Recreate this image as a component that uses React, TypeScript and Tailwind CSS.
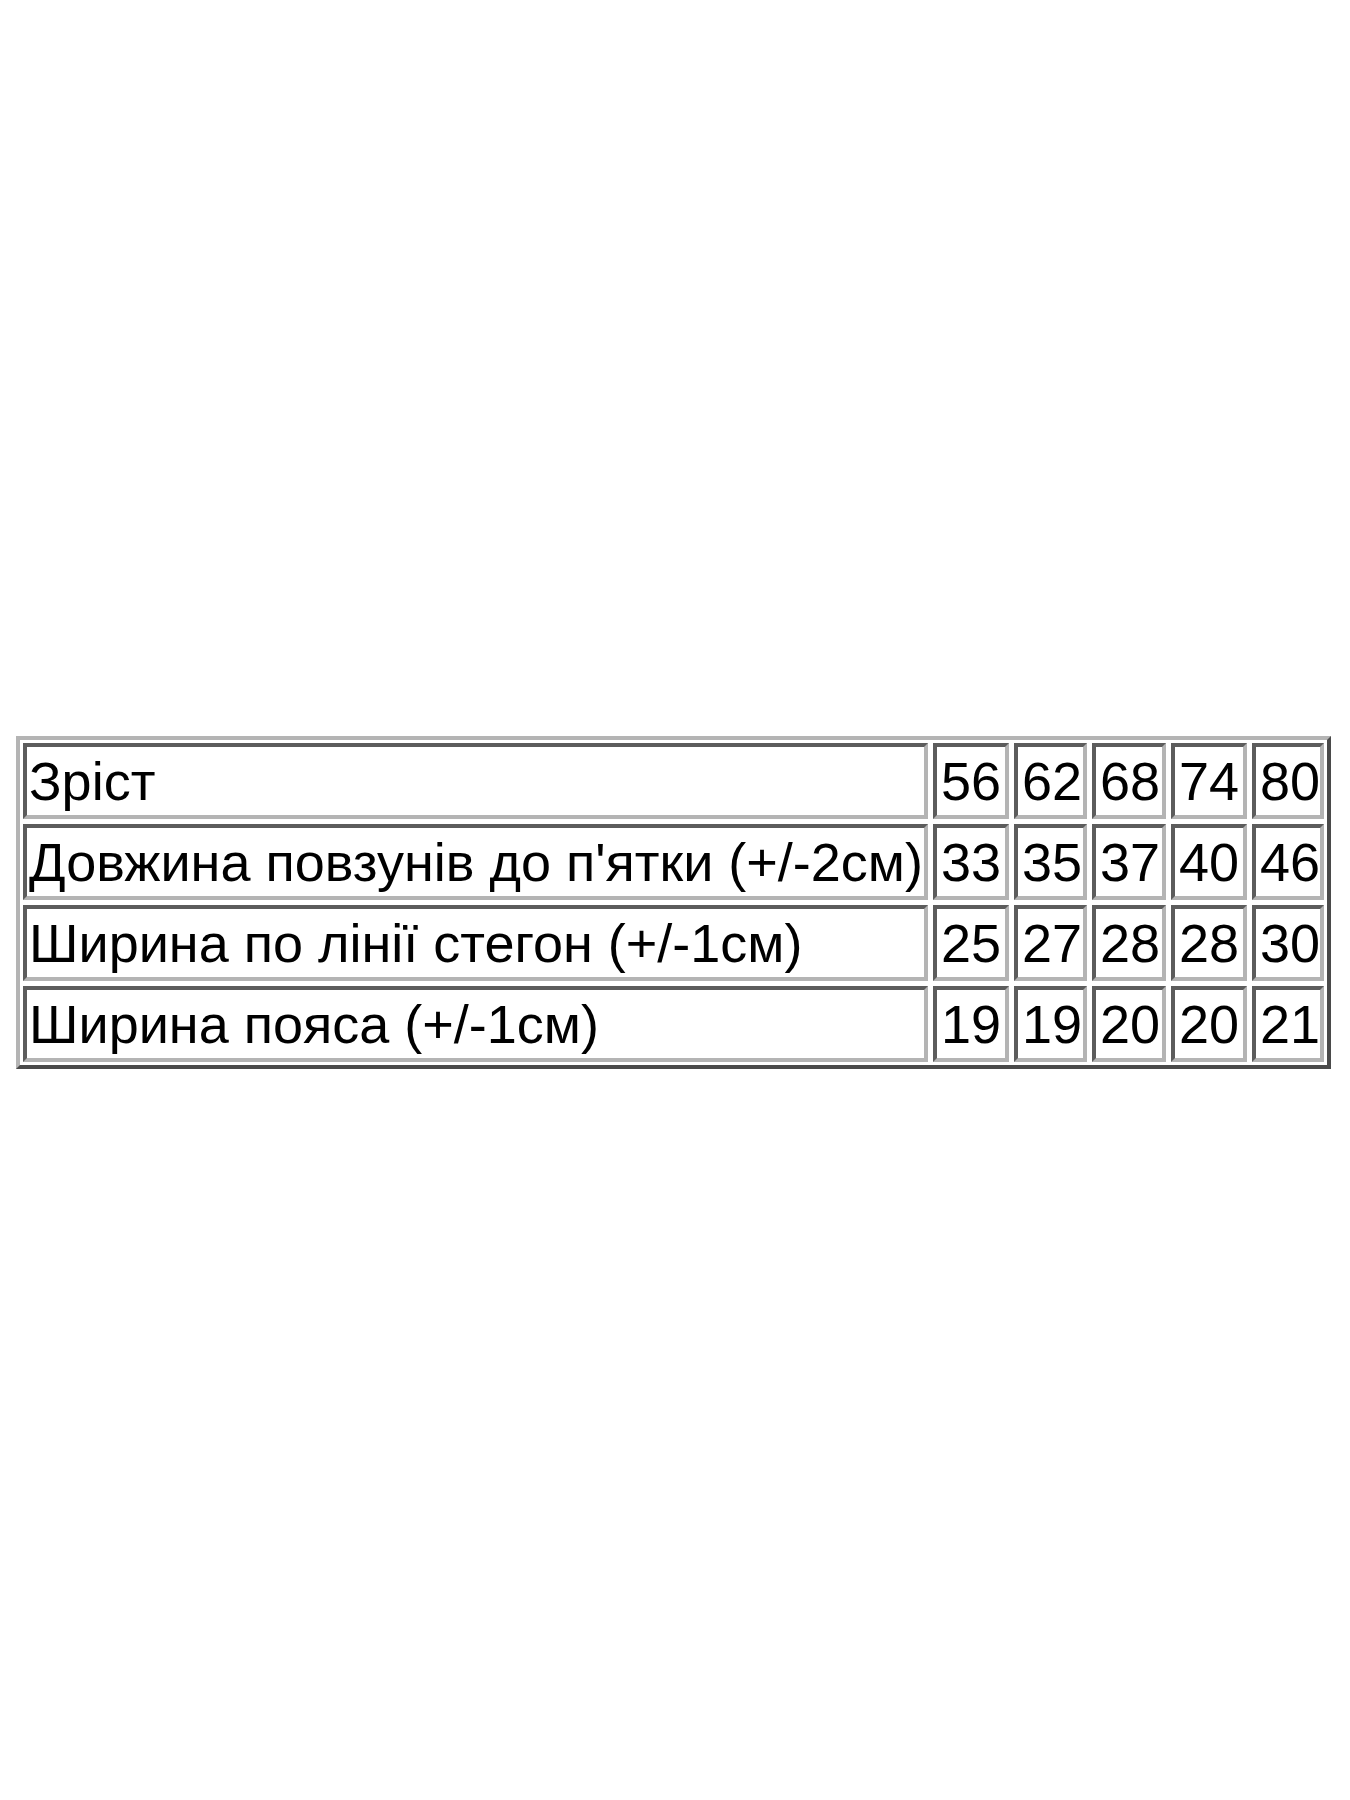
const ROWS: { label: string; values: string[] }[] = [
  { label: "Зріст", values: ["56", "62", "68", "74", "80"] },
  { label: "Довжина повзунів до п'ятки (+/-2см)", values: ["33", "35", "37", "40", "46"] },
  { label: "Ширина по лінії стегон (+/-1см)", values: ["25", "27", "28", "28", "30"] },
  { label: "Ширина пояса (+/-1см)", values: ["19", "19", "20", "20", "21"] },
];

const cellClass =
  "h-[76px] border-4 border-t-[#5c5c5c] border-l-[#5c5c5c] border-b-[#b4b4b4] border-r-[#b4b4b4] bg-white py-[3px] leading-[62px] whitespace-nowrap";

export default function App() {
  return (
    <div className="flex h-[1800px] w-full items-start bg-white pl-[16px] pt-[736px] font-['Liberation_Sans',Arial,sans-serif] text-[54px] text-black">
      {/* Size chart */}
      <div className="border-4 border-t-[#b4b4b4] border-l-[#b4b4b4] border-b-[#4a4a4a] border-r-[#4a4a4a] p-[3px]">
        <div className="grid grid-cols-[905px_76px_73px_74px_76px_72px] gap-[5px]">
          {ROWS.map((row) => (
            <div key={row.label} className="contents">
              <div className={`${cellClass} px-[2px]`}>{row.label}</div>
              {row.values.map((v, i) => (
                <div key={i} className={`${cellClass} px-[4px]`}>
                  {v}
                </div>
              ))}
            </div>
          ))}
        </div>
      </div>
    </div>
  );
}
